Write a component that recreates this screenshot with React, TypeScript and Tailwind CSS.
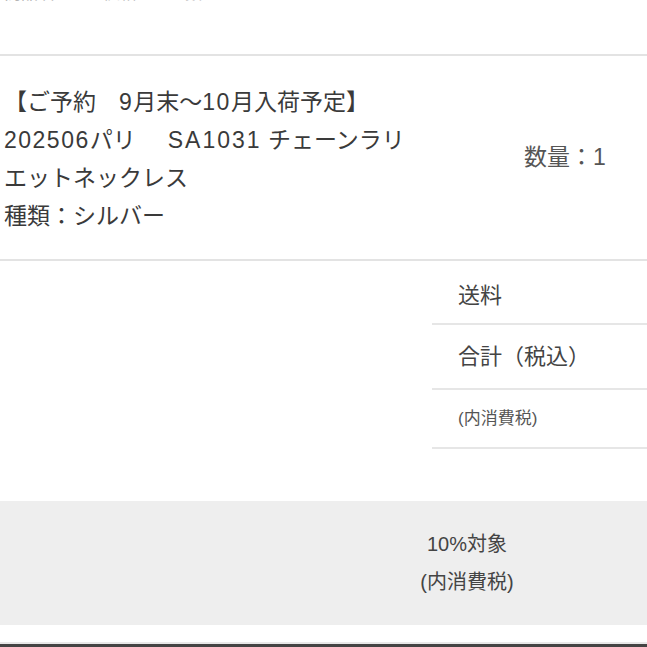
const jp = "font-['Liberation_Sans','Noto_Sans_CJK_JP',sans-serif]";

const App = () => {
  return (
    <div className={`w-[647px] h-[647px] bg-white overflow-hidden ${jp}`}>
      {/* cut-off header row */}
      <div className="h-[56px] overflow-hidden border-b-2 border-[#e3e3e3]">
        <div className="-mt-[18px] flex gap-[48px] pl-[4px] text-[17px] leading-[24px] text-[#b5b5b5]">
          <span>商品名</span>
          <span>価格</span>
          <span>数量</span>
        </div>
      </div>

      {/* item row */}
      <div className="h-[205px] flex items-center border-b-2 border-[#e3e3e3]">
        <div className="w-[432px] pl-[4px] pt-[2px] text-[23px] leading-[38px] text-[#3a3a3a] whitespace-nowrap">
          <div>
            【ご予約{"　"}<span className="tracking-[1.5px]">9</span>月末〜<span className="tracking-[1.5px]">10</span>月入荷予定】
          </div>
          <div>
            <span className="tracking-[1.5px]">202506</span>パリ{"　"}
            <span className="ml-[9px] tracking-[2px]">SA1031</span> チェーンラリ
          </div>
          <div>エットネックレス</div>
          <div>種類：シルバー</div>
        </div>
        <div className="pl-[92px] text-[23px] text-[#555]">数量：1</div>
      </div>

      {/* totals */}
      <div className="flex">
        <div className="w-[432px]" />
        <div className="flex-1">
          <div className="h-[64px] flex items-center pl-[26px] pt-[6px] border-b-2 border-[#e6e6e6] text-[22px] text-[#444]">
            送料
          </div>
          <div className="h-[65px] flex items-center pl-[26px] border-b-2 border-[#e6e6e6] text-[22px] text-[#444]">
            合計（税込）
          </div>
          <div className="h-[59px] flex items-center pl-[26px] border-b-2 border-[#e6e6e6] text-[17px] text-[#555]">
            (内消費税)
          </div>
        </div>
      </div>

      {/* tax band */}
      <div className="mt-[52px] h-[124px] bg-[#eeeeee] flex">
        <div className="w-[367px]" />
        <div className="w-[200px] flex flex-col items-center justify-center text-[20px] leading-[38px] text-[#444]">
          <div>10%対象</div>
          <div>(内消費税)</div>
        </div>
      </div>

      <div className="h-[17px]" />
      <div className="h-[2px] bg-[#e8e8e8]" />
      <div className="h-[3px] bg-[#444]" />
    </div>
  );
};

export default App;
